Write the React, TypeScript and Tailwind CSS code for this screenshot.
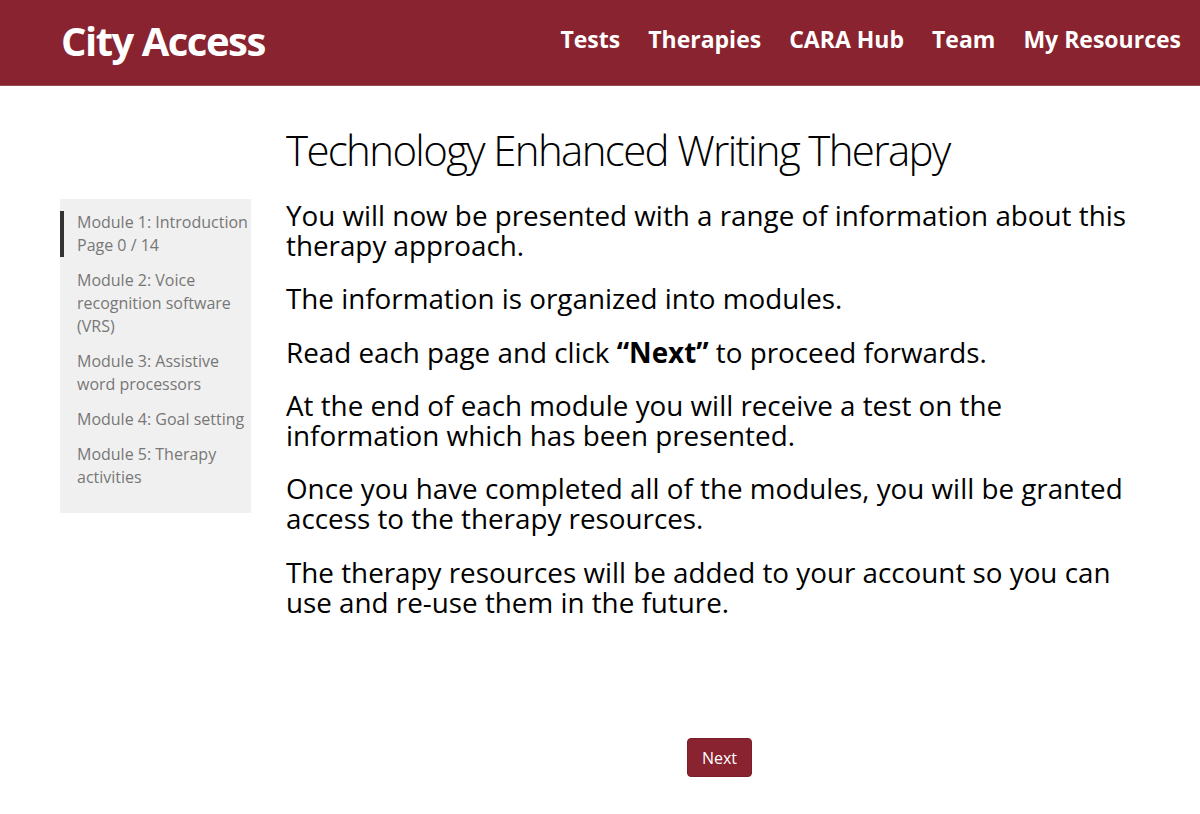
import React from "react";

const font = { fontFamily: '"Open Sans", "Noto Sans", sans-serif' };

export default function App() {
  const modules = [
    { text: ["Module 1: Introduction", "Page 0 / 14"], active: true },
    { text: ["Module 2: Voice recognition software (VRS)"], active: false },
    { text: ["Module 3: Assistive word processors"], active: false },
    { text: ["Module 4: Goal setting"], active: false },
    { text: ["Module 5: Therapy activities"], active: false },
  ];
  return (
    <div className="min-h-[814px] bg-white" style={font}>
      <header className="h-[86px] bg-[#88232f] border-b border-[#9a4a55] flex items-center justify-between pl-[61px] pr-[19px]">
        <div className="text-white font-bold text-[40px] tracking-[-1.5px] leading-none -mt-[4px]">City Access</div>
        <nav className="flex items-center gap-[28px] text-white font-bold text-[23px] -mt-[7px]">
          <span>Tests</span>
          <span>Therapies</span>
          <span>CARA Hub</span>
          <span>Team</span>
          <span>My Resources</span>
        </nav>
      </header>
      <div className="flex pl-[60px]">
        <aside className="w-[191px] shrink-0 mt-[113px] self-start bg-[#f0f0f0] pt-[12px] pb-[24px] flex flex-col gap-[12px]">
          {modules.map((m, i) => (
            <div
              key={i}
              className={
                "text-[16px] leading-[23px] text-[#777] pr-[2px] " +
                (m.active ? "border-l-[4px] border-[#333] pl-[13px]" : "pl-[17px]")
              }
            >
              {m.text.map((t, j) => (
                <div key={j}>{t}</div>
              ))}
            </div>
          ))}
        </aside>
        <main className="ml-[35px] w-[867px] pt-[34px]">
          <h1 className="font-light text-[42px] leading-[60px] tracking-[-1.65px] text-black">
            Technology Enhanced Writing Therapy
          </h1>
          <div className="mt-[20px] text-[27.8px] leading-[30px] text-black">
            <p className="mb-[23px]">You will now be presented with a range of information about this therapy approach.</p>
            <p className="mb-[24px]">The information is organized into modules.</p>
            <p className="mb-[23px]">
              Read each page and click <b className="font-bold">“Next”</b> to proceed forwards.
            </p>
            <p className="mb-[23px]">At the end of each module you will receive a test on the information which has been presented.</p>
            <p className="mb-[24px]">Once you have completed all of the modules, you will be granted access to the therapy resources.</p>
            <p>The therapy resources will be added to your account so you can use and re-use them in the future.</p>
          </div>
          <div className="flex justify-center mt-[121px]">
            <button className="h-[39px] w-[65px] bg-[#88232f] text-white text-[16px] rounded-[4px] border border-[#7a1e29]">
              Next
            </button>
          </div>
        </main>
      </div>
    </div>
  );
}
